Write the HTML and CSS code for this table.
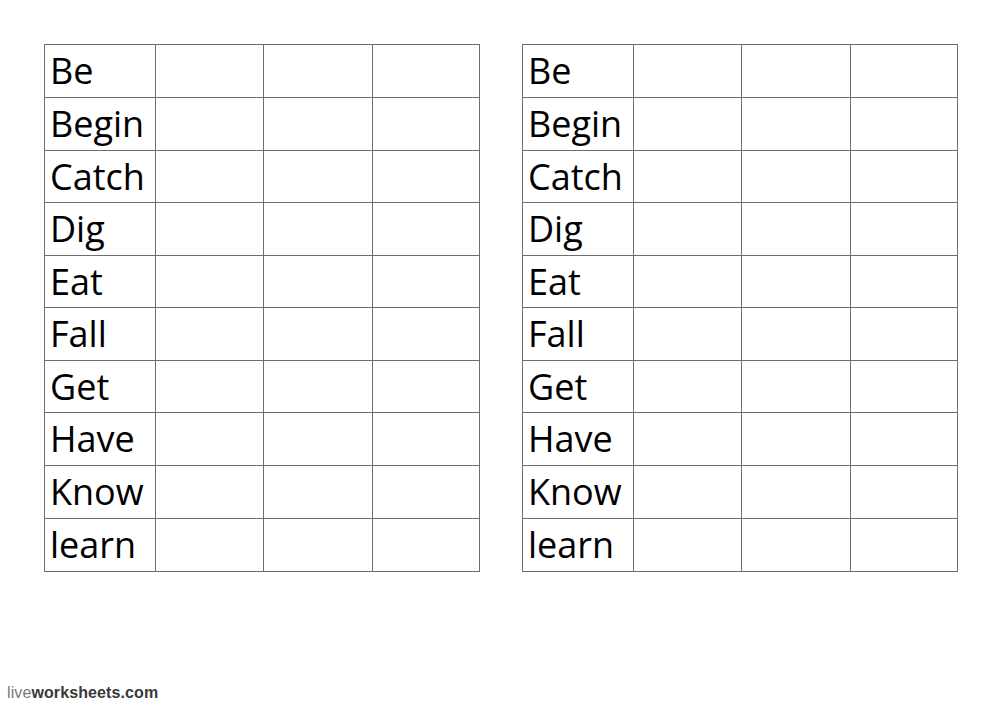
FILE: index.html
```html
<!DOCTYPE html>
<html>
<head>
<meta charset="utf-8">
<link rel="stylesheet" href="styles.css">
</head>
<body>
<div class="page">
  <div class="tables">
    <div class="grid">
      <div class="cell word">Be</div><div class="cell"></div><div class="cell"></div><div class="cell"></div>
      <div class="cell word">Begin</div><div class="cell"></div><div class="cell"></div><div class="cell"></div>
      <div class="cell word">Catch</div><div class="cell"></div><div class="cell"></div><div class="cell"></div>
      <div class="cell word">Dig</div><div class="cell"></div><div class="cell"></div><div class="cell"></div>
      <div class="cell word">Eat</div><div class="cell"></div><div class="cell"></div><div class="cell"></div>
      <div class="cell word">Fall</div><div class="cell"></div><div class="cell"></div><div class="cell"></div>
      <div class="cell word">Get</div><div class="cell"></div><div class="cell"></div><div class="cell"></div>
      <div class="cell word">Have</div><div class="cell"></div><div class="cell"></div><div class="cell"></div>
      <div class="cell word">Know</div><div class="cell"></div><div class="cell"></div><div class="cell"></div>
      <div class="cell word">learn</div><div class="cell"></div><div class="cell"></div><div class="cell"></div>
    </div>
    <div class="grid">
      <div class="cell word">Be</div><div class="cell"></div><div class="cell"></div><div class="cell"></div>
      <div class="cell word">Begin</div><div class="cell"></div><div class="cell"></div><div class="cell"></div>
      <div class="cell word">Catch</div><div class="cell"></div><div class="cell"></div><div class="cell"></div>
      <div class="cell word">Dig</div><div class="cell"></div><div class="cell"></div><div class="cell"></div>
      <div class="cell word">Eat</div><div class="cell"></div><div class="cell"></div><div class="cell"></div>
      <div class="cell word">Fall</div><div class="cell"></div><div class="cell"></div><div class="cell"></div>
      <div class="cell word">Get</div><div class="cell"></div><div class="cell"></div><div class="cell"></div>
      <div class="cell word">Have</div><div class="cell"></div><div class="cell"></div><div class="cell"></div>
      <div class="cell word">Know</div><div class="cell"></div><div class="cell"></div><div class="cell"></div>
      <div class="cell word">learn</div><div class="cell"></div><div class="cell"></div><div class="cell"></div>
    </div>
  </div>
  <div class="logo"><span class="live">live</span><span class="ws">worksheets.com</span></div>
</div>
</body>
</html>
```
FILE: styles.css
```css
html, body {
  margin: 0;
  padding: 0;
  background: #ffffff;
}
.page {
  width: 1000px;
  height: 707px;
  display: flex;
  flex-direction: column;
  box-sizing: border-box;
  padding: 44px 0 0 0;
}
.tables {
  display: flex;
  gap: 42px;
  padding-left: 44px;
}
.grid {
  display: grid;
  grid-template-columns: 111px 108px 109px 107px;
  grid-template-rows: 53px 53px 52px 53px 52px 53px 52px 53px 53px 53px;
  border-left: 1px solid #6e6e6e;
  border-top: 1px solid #6e6e6e;
}
.cell {
  border-right: 1px solid #6e6e6e;
  border-bottom: 1px solid #6e6e6e;
  box-sizing: border-box;
}
.word {
  font-family: "Open Sans", sans-serif;
  font-size: 36px;
  line-height: 36px;
  color: #000000;
  padding: 8px 0 0 5px;
  white-space: nowrap;
}
.logo {
  margin-top: auto;
  margin-left: 7px;
  margin-bottom: 5px;
  font-family: "Liberation Sans", Arial, sans-serif;
  font-size: 16px;
  line-height: 18px;
  letter-spacing: 0.1px;
}
.live {
  color: #7a7a7a;
}
.ws {
  color: #3a3a3a;
  font-weight: bold;
}
```
